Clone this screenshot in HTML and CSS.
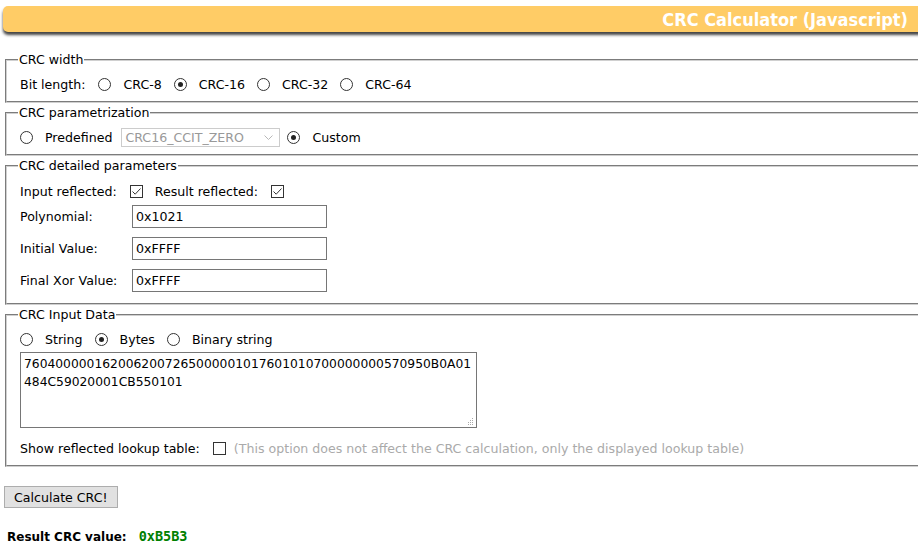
FILE: index.html
```html
<!DOCTYPE html>
<html>
<head>
<meta charset="utf-8">
<link rel="stylesheet" href="styles.css">
</head>
<body>
<div class="page">
  <header class="titlebar"><h1>CRC Calculator (Javascript)</h1></header>

  <div class="sets">
    <fieldset class="fs fs-width">
      <legend>CRC width</legend>
      <div class="row">
        <span class="lbl">Bit length:</span>
        <span class="radio"></span><span class="opt">CRC-8</span>
        <span class="radio on"></span><span class="opt">CRC-16</span>
        <span class="radio"></span><span class="opt">CRC-32</span>
        <span class="radio"></span><span class="opt">CRC-64</span>
      </div>
    </fieldset>

    <fieldset class="fs fs-param">
      <legend>CRC parametrization</legend>
      <div class="row">
        <span class="radio first"></span><span class="opt">Predefined</span>
        <span class="select"><span class="select-text">CRC16_CCIT_ZERO</span><svg class="chev" width="9" height="6" viewBox="0 0 9 6"><path d="M0.5 0.5 L4.5 4.5 L8.5 0.5" fill="none" stroke="#b8b8b8" stroke-width="1"/></svg></span>
        <span class="radio on"></span><span class="opt">Custom</span>
      </div>
    </fieldset>

    <fieldset class="fs fs-detail">
      <legend>CRC detailed parameters</legend>
      <div class="row">
        <span class="lbl">Input reflected:</span>
        <span class="check on"><svg width="11" height="11" viewBox="0 0 11 11"><path d="M1.5 5.5 L4.2 8.2 L9.5 2.5" fill="none" stroke="#333" stroke-width="1"/></svg></span>
        <span class="lbl">Result reflected:</span>
        <span class="check on"><svg width="11" height="11" viewBox="0 0 11 11"><path d="M1.5 5.5 L4.2 8.2 L9.5 2.5" fill="none" stroke="#333" stroke-width="1"/></svg></span>
      </div>
      <div class="field"><span class="flabel">Polynomial:</span><span class="input">0x1021</span></div>
      <div class="field"><span class="flabel">Initial Value:</span><span class="input">0xFFFF</span></div>
      <div class="field"><span class="flabel">Final Xor Value:</span><span class="input">0xFFFF</span></div>
    </fieldset>

    <fieldset class="fs fs-input">
      <legend>CRC Input Data</legend>
      <div class="row row-top">
        <span class="radio first"></span><span class="opt">String</span>
        <span class="radio on"></span><span class="opt">Bytes</span>
        <span class="radio"></span><span class="opt">Binary string</span>
      </div>
      <div class="textarea">7604000001620062007265000001017601010700000000570950B0A01<br>484C59020001CB550101<svg class="grip" width="7" height="7" viewBox="0 0 7 7"><rect x="5" y="0" width="1" height="1" fill="#aaa"/><rect x="3" y="2" width="1" height="1" fill="#aaa"/><rect x="5" y="2" width="1" height="1" fill="#aaa"/><rect x="1" y="4" width="1" height="1" fill="#aaa"/><rect x="3" y="4" width="1" height="1" fill="#aaa"/><rect x="5" y="4" width="1" height="1" fill="#aaa"/><rect x="1" y="6" width="1" height="1" fill="#aaa"/><rect x="3" y="6" width="1" height="1" fill="#aaa"/><rect x="5" y="6" width="1" height="1" fill="#aaa"/></svg></div>
      <div class="row row-bottom">
        <span class="lbl">Show reflected lookup table:</span>
        <span class="check"></span>
        <span class="note">(This option does not affect the CRC calculation, only the displayed lookup table)</span>
      </div>
    </fieldset>
  </div>

  <div class="actions"><span class="button">Calculate CRC!</span></div>

  <div class="result"><span class="result-label">Result CRC value:</span><span class="result-value">0xB5B3</span></div>
</div>
</body>
</html>
```
FILE: styles.css
```css
html, body {
  margin: 0;
  padding: 0;
  overflow: hidden;
  background: #fff;
}
body {
  font-family: "DejaVu Sans", Verdana, sans-serif;
  font-size: 12.6px;
  color: #000;
}
.page {
  padding: 6px 0 0 0;
}
.titlebar {
  margin-left: 3px;
  margin-right: -10px;
  height: 26px;
  background: #ffcc66;
  border-radius: 5px;
  box-shadow: 0 3px 3px #444;
  display: flex;
  justify-content: flex-end;
  align-items: center;
  padding-right: 20px;
}
.titlebar h1 {
  margin: 0;
  padding-top: 1px;
  font-family: "DejaVu Sans Condensed", "DejaVu Sans", sans-serif;
  font-weight: bold;
  font-size: 18px;
  color: #fff;
}
.sets {
  margin-top: 21px;
  margin-left: 5px;
  margin-right: -30px;
  display: flex;
  flex-direction: column;
  gap: 3px;
}
.fs {
  margin: 0;
  padding: 0 14px 0 13px;
  border: 2px groove #d0d0d0;
  border-right: none;
  min-width: 0;
}
.fs legend {
  padding: 0 1px;
  margin-left: -2px;
  line-height: 14px;
}
.row {
  display: flex;
  align-items: center;
  height: 22px;
  white-space: nowrap;
}
.fs-width .row, .fs-param .row { margin: 6px 0 6px; }
.lbl { margin-right: 13px; }
.opt { margin-right: 12px; }
.radio {
  width: 11px;
  height: 11px;
  border: 1px solid #333;
  border-radius: 50%;
  margin-right: 12px;
  position: relative;
  flex: none;
  background: #fff;
}
.radio.on::after {
  content: "";
  position: absolute;
  left: 3px;
  top: 3px;
  width: 5px;
  height: 5px;
  border-radius: 50%;
  background: #222;
}
.check {
  width: 11px;
  height: 11px;
  border: 1px solid #333;
  margin-right: 12px;
  flex: none;
  display: flex;
}
.check svg { display: block; }
.select {
  width: 148px;
  height: 17px;
  border: 1px solid #ccc;
  margin-left: -3px;
  margin-right: 7px;
  display: flex;
  align-items: center;
  justify-content: space-between;
  padding: 0 6px 0 3px;
  box-sizing: content-box;
  color: #999;
}
.chev { margin-top: 2px; }
.fs-detail .row { margin: 7px 0 3px; }
.field {
  display: flex;
  align-items: center;
  height: 23px;
  margin-bottom: 9px;
}
.flabel { width: 112px; flex: none; }
.input {
  width: 190px;
  height: 21px;
  border: 1px solid #767676;
  padding-left: 3px;
  display: flex;
  align-items: center;
  flex: none;
}
.fs-detail { padding-bottom: 1px; }
.fs-detail .field:last-child { margin-bottom: 10px; }
.fs-input .row-top { margin: 6px 0 2px; }
.textarea {
  width: 449px;
  height: 70px;
  border: 1px solid #767676;
  padding: 2px 3px;
  line-height: 18px;
  font-size: 12.3px;
  position: relative;
}
.grip {
  position: absolute;
  right: 2px;
  bottom: 2px;
}
.fs-input .row-bottom { margin: 9px 0 6px; }
.note { color: #aaa; margin-left: -4px; }
.actions {
  margin-top: 19px;
  margin-left: 4px;
}
.button {
  display: inline-flex;
  align-items: center;
  height: 20px;
  padding: 0 9px;
  background: #e1e1e1;
  border: 1px solid #adadad;
  color: #000;
}
.result {
  margin-top: 20px;
  margin-left: 7px;
  display: flex;
  align-items: baseline;
  font-size: 12px;
}
.result-label { font-weight: bold; }
.result-value {
  margin-left: 12px;
  font-family: "DejaVu Sans Mono", monospace;
  font-weight: bold;
  font-size: 13.5px;
  color: #008000;
}
```
